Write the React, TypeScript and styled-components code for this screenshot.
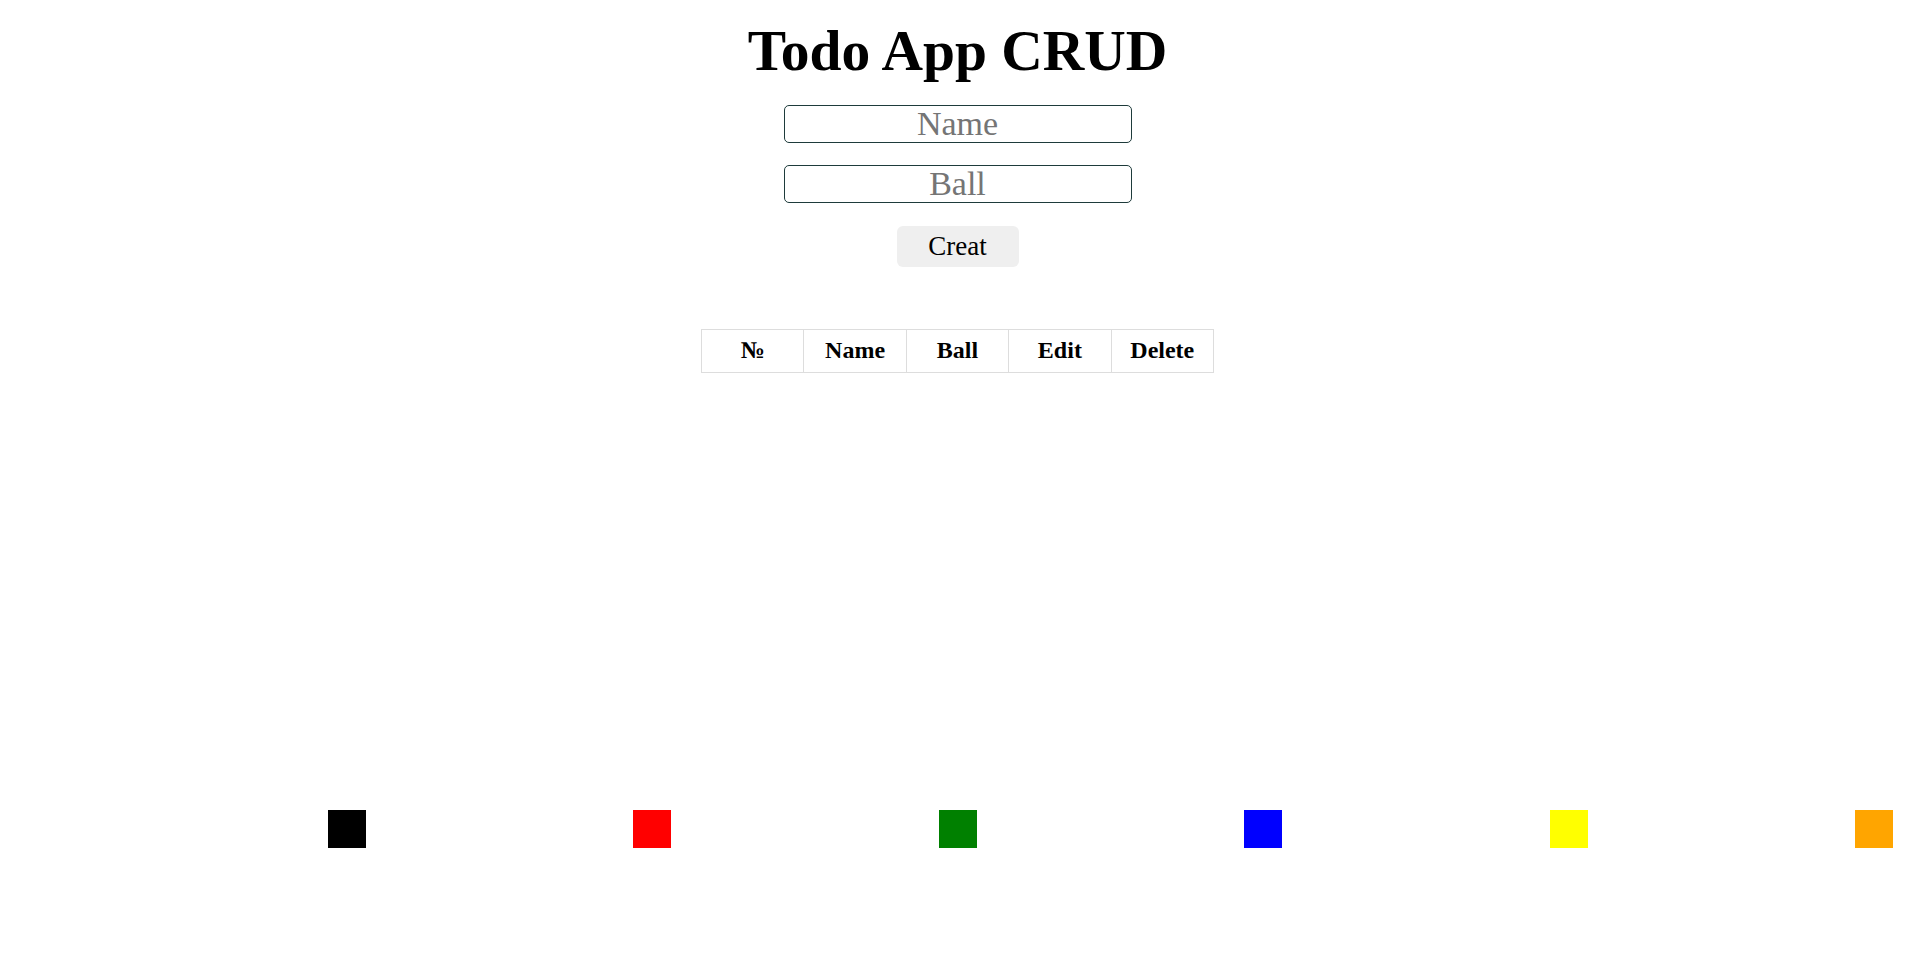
import styled, { createGlobalStyle } from "styled-components";

const GlobalStyle = createGlobalStyle`
  html, body {
    margin: 0;
    padding: 0;
    background: #ffffff;
    font-family: "Liberation Serif", "Times New Roman", serif;
  }
`;

const Page = styled.div`
  display: flex;
  flex-direction: column;
  align-items: center;
  padding-top: 22px;
  padding-left: 10px;
`;

const Title = styled.h1`
  margin: 0;
  font-size: 57.5px;
  line-height: 1;
  font-weight: bold;
  color: #000;
`;

const Form = styled.form`
  display: flex;
  flex-direction: column;
  align-items: center;
  gap: 22px;
  margin-top: 25px;
`;

const Input = styled.input`
  box-sizing: border-box;
  width: 348px;
  height: 38px;
  padding: 0;
  border: 1px solid #1e3b3b;
  border-radius: 5px;
  font-family: "Liberation Serif", "Times New Roman", serif;
  font-size: 34px;
  text-align: center;
  outline: none;

  &::placeholder {
    color: #757575;
  }
`;

const Button = styled.button`
  width: 122px;
  height: 41px;
  margin-top: 1px;
  border: none;
  border-radius: 6px;
  background: #efefef;
  font-family: "Liberation Serif", "Times New Roman", serif;
  font-size: 27px;
  color: #000;
  cursor: pointer;
`;

const Table = styled.table`
  margin-top: 62px;
  width: 513px;
  border-collapse: collapse;
  table-layout: fixed;
`;

const Th = styled.th`
  height: 42px;
  padding: 0;
  border: 1px solid #dddddd;
  font-size: 24px;
  font-weight: bold;
  text-align: center;
  color: #000;
`;

const Colors = styled.div`
  display: flex;
  gap: 267.4px;
  padding-left: 328px;
  margin-top: 437px;
`;

const Swatch = styled.div<{ $color: string }>`
  width: 38px;
  height: 38px;
  flex-shrink: 0;
  background: ${(p) => p.$color};
`;

const colors = ["black", "red", "green", "blue", "yellow", "orange"];

export default function App() {
  return (
    <>
      <GlobalStyle />
      <Page>
        <Title>Todo App CRUD</Title>
        <Form onSubmit={(e) => e.preventDefault()}>
          <Input placeholder="Name" />
          <Input placeholder="Ball" />
          <Button type="submit">Creat</Button>
        </Form>
        <Table>
          <thead>
            <tr>
              <Th>№</Th>
              <Th>Name</Th>
              <Th>Ball</Th>
              <Th>Edit</Th>
              <Th>Delete</Th>
            </tr>
          </thead>
        </Table>
      </Page>
      <Colors>
        {colors.map((c) => (
          <Swatch key={c} $color={c} />
        ))}
      </Colors>
    </>
  );
}
